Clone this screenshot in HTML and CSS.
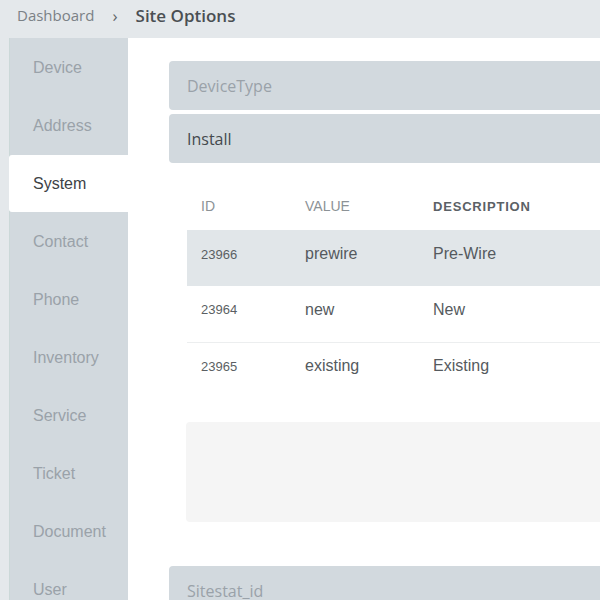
FILE: index.html
```html
<!DOCTYPE html>
<html>
<head>
<meta charset="utf-8">
<link rel="stylesheet" href="styles.css">
</head>
<body>
<header class="topbar">
  <span class="crumb">Dashboard</span>
  <span class="sep">›</span>
  <span class="crumb-current">Site Options</span>
</header>
<div class="layout">
  <nav class="sidebar">
    <div class="nav-item">Device</div>
    <div class="nav-item">Address</div>
    <div class="nav-item active">System</div>
    <div class="nav-item">Contact</div>
    <div class="nav-item">Phone</div>
    <div class="nav-item">Inventory</div>
    <div class="nav-item">Service</div>
    <div class="nav-item">Ticket</div>
    <div class="nav-item">Document</div>
    <div class="nav-item">User</div>
  </nav>
  <main class="content">
    <div class="panel muted">DeviceType</div>
    <div class="panel">Install</div>
    <div class="panel-body">
      <table class="grid">
        <thead>
          <tr><th class="c-id">ID</th><th class="c-val">VALUE</th><th class="c-desc strong">DESCRIPTION</th></tr>
        </thead>
        <tbody>
          <tr class="hl"><td class="c-id">23966</td><td class="c-val">prewire</td><td class="c-desc">Pre-Wire</td></tr>
          <tr><td class="c-id">23964</td><td class="c-val">new</td><td class="c-desc">New</td></tr>
          <tr class="bt"><td class="c-id">23965</td><td class="c-val">existing</td><td class="c-desc">Existing</td></tr>
        </tbody>
      </table>
      <div class="well"></div>
    </div>
    <div class="panel muted">Sitestat_id</div>
  </main>
</div>
</body>
</html>
```
FILE: styles.css
```css
* { box-sizing: border-box; }
html, body { margin: 0; padding: 0; }
body {
  width: 600px;
  height: 600px;
  overflow: hidden;
  background: #e4e8eb;
  font-family: "Liberation Sans", Arial, sans-serif;
}
.topbar {
  height: 38px;
  display: flex;
  align-items: center;
  padding-left: 17px;
  padding-bottom: 8px;
  font-family: "Open Sans", sans-serif;
}
.crumb { color: #7b8186; font-size: 15px; }
.sep { color: #5f6468; margin: 0 18px 0 18px; font-size: 17px; }
.crumb-current { color: #4a4f53; font-weight: 600; font-size: 17px; }
.layout {
  display: flex;
  padding-left: 9px;
  height: 562px;
}
.sidebar {
  width: 119px;
  flex: none;
  background: #d2d9de;
  border-left: 1px solid #cbd8d8;
  padding-top: 1px;
}
.nav-item {
  height: 58px;
  display: flex;
  align-items: center;
  padding-left: 23px;
  font-size: 16px;
  color: #9aa2a9;
}
.nav-item.active {
  background: #fff;
  color: #3d4246;
  border-radius: 3px 0 0 3px;
  margin-left: -1px;
  padding-left: 24px;
  height: 57px;
  margin-bottom: 1px;
}
.content {
  flex: none;
  width: 600px;
  background: #fff;
  padding: 23px 0 0 41px;
}
.panel {
  height: 49px;
  margin-bottom: 4px;
  background: #d2d9de;
  border-radius: 4px;
  display: flex;
  align-items: center;
  padding-left: 18px;
  font-family: "Open Sans", sans-serif;
  font-size: 16px;
  color: #44494d;
}
.panel.muted { color: #9aa2a9; }
.panel-body {
  padding: 11px 0 44px 18px;
}
.grid {
  border-collapse: collapse;
  width: 500px;
}
.grid th {
  height: 52px;
  text-align: left;
  font-weight: normal;
  font-size: 14px;
  color: #8c9296;
  padding: 0;
  padding-top: 4px;
}
.grid th.strong { font-weight: bold; color: #5b6166; letter-spacing: 0.8px; font-size: 13px; }
.grid td {
  height: 56px;
  padding: 0 0 8px 0;
  font-size: 16px;
  color: #555a5e;
}
.grid td.c-id { font-size: 13px; color: #5b5f63; }
.c-id { width: 118px; padding-left: 14px !important; }
.c-val { width: 128px; }
.grid tr.hl { background: #e1e6e9; }
.grid tr.bt td { border-top: 1px solid #eceeef; }
.well {
  margin-top: 24px;
  margin-left: -1px;
  height: 100px;
  width: 500px;
  background: #f5f5f5;
  border-radius: 4px;
}
```
